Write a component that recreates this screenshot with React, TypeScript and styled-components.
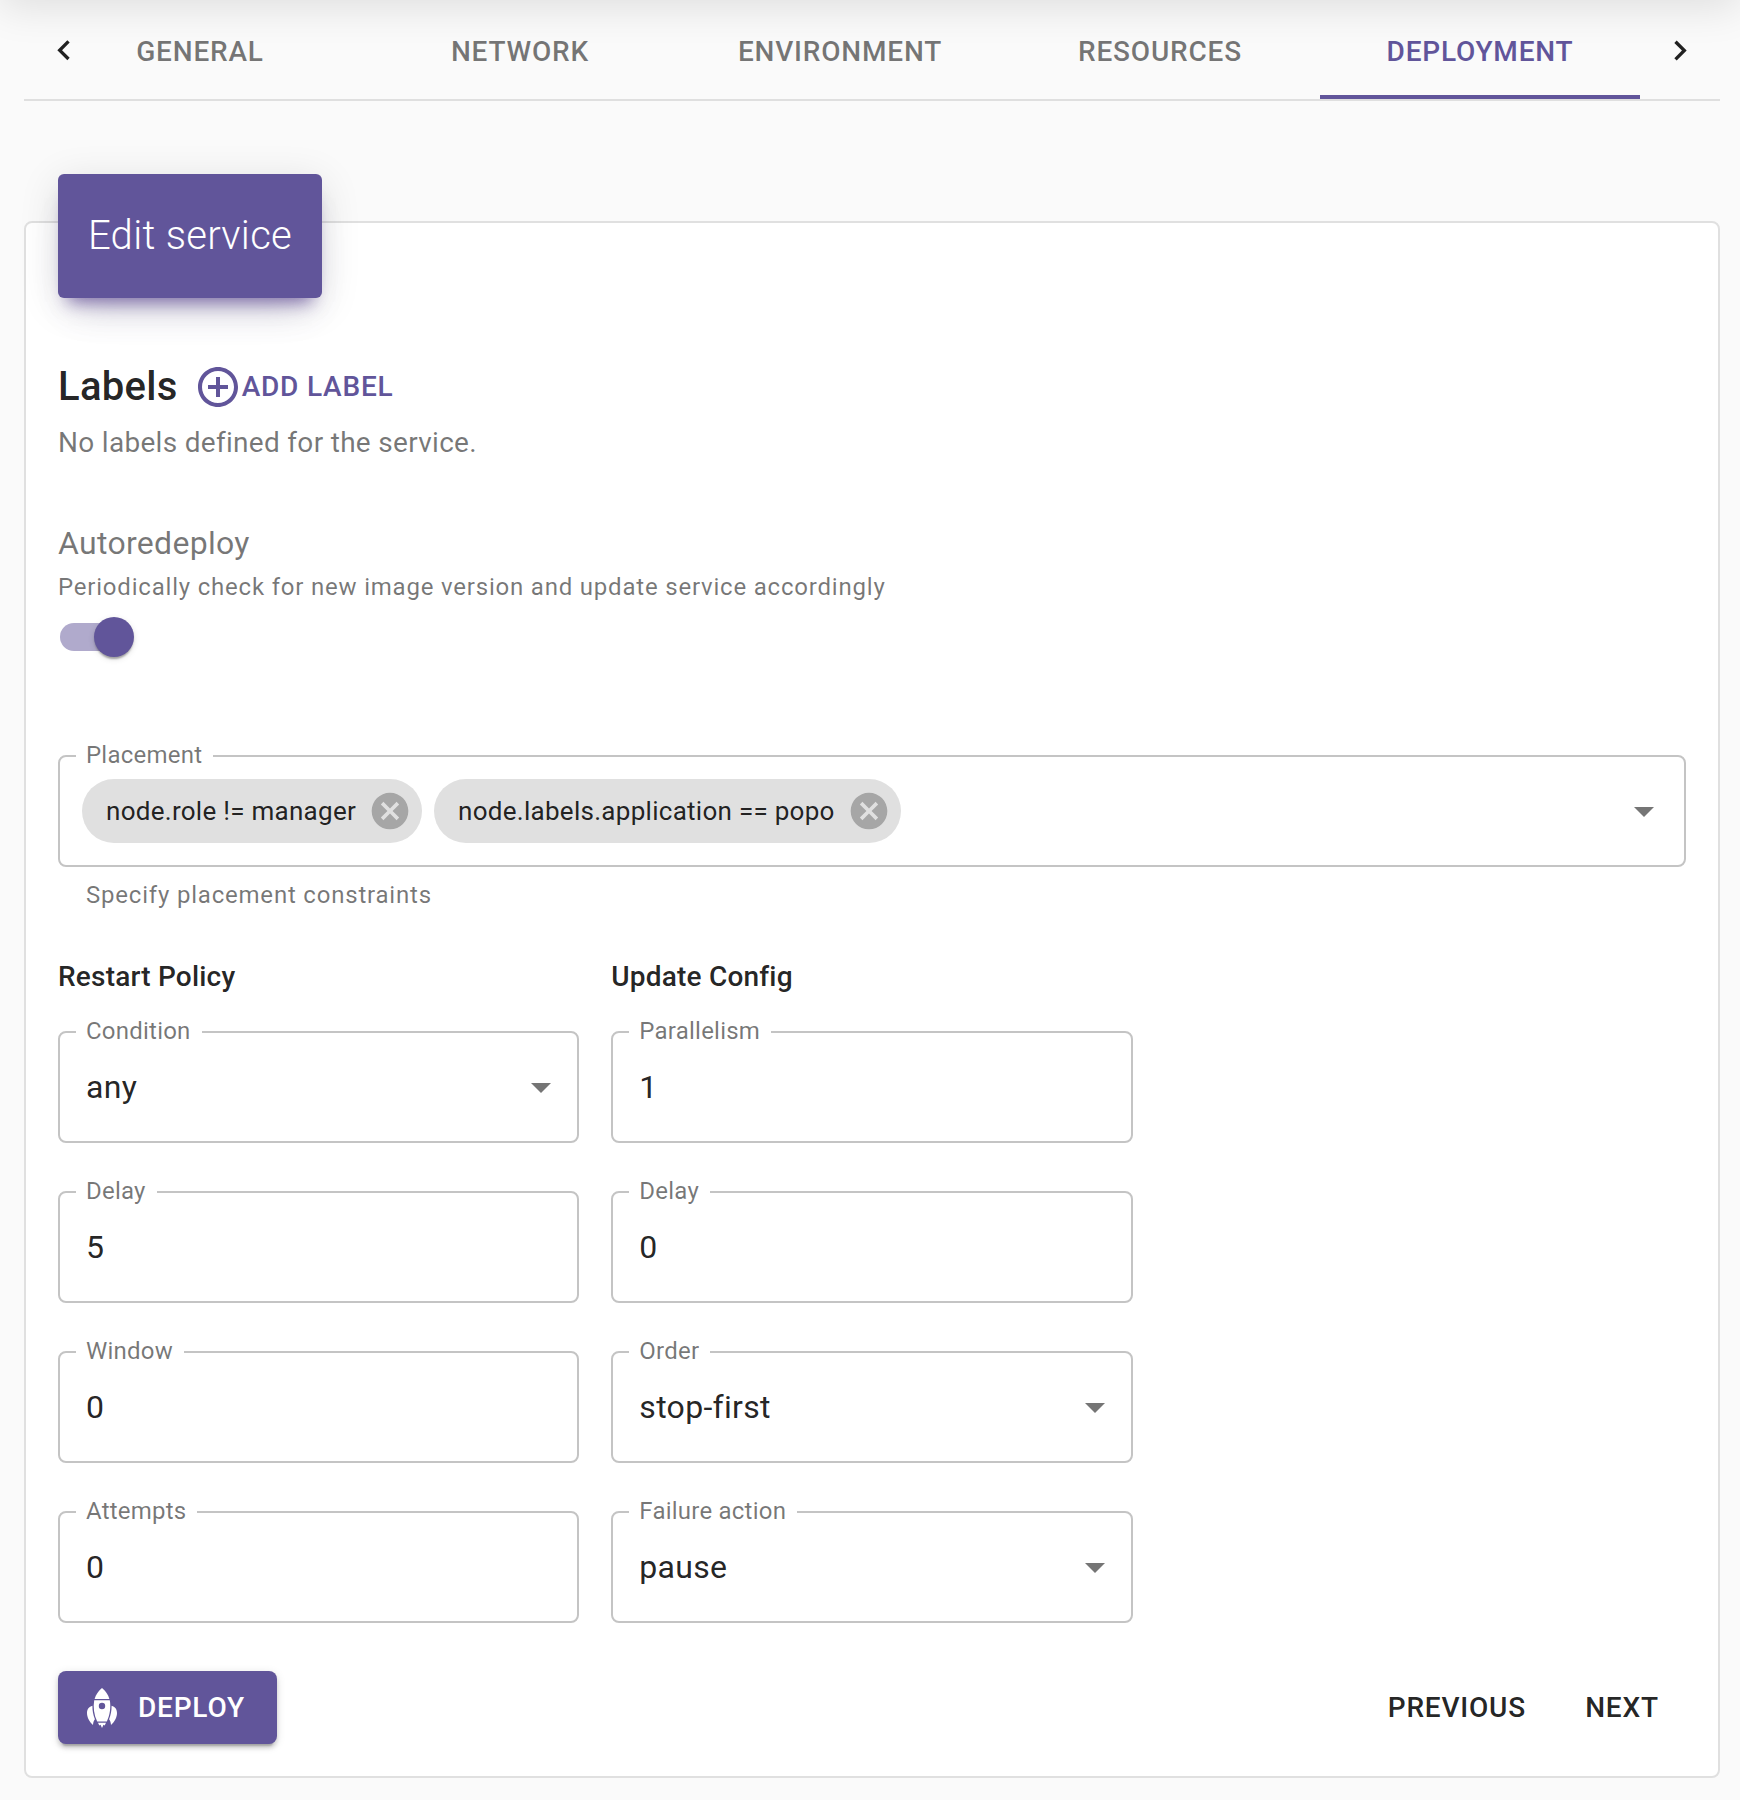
import React from 'react';
import styled, { createGlobalStyle } from 'styled-components';

const primary = '#61559a';
const ink = 'rgba(0, 0, 0, 0.87)';
const muted = 'rgba(0, 0, 0, 0.54)';

const GlobalStyle = createGlobalStyle`
  *, *::before, *::after { box-sizing: border-box; }
  body {
    margin: 0;
    background: #fafafa;
    color: ${ink};
    font-family: Roboto, "Noto Sans", sans-serif;
    font-size: 28px;
    -webkit-font-smoothing: antialiased;
  }
  h2, h3, p, fieldset, legend { margin: 0; padding: 0; }
  button { font-family: inherit; border: 0; background: none; padding: 0; margin: 0; color: inherit; }
`;

const Page = styled.div`
  position: relative;
  height: 1800px;
  overflow: hidden;
  padding: 3px 20px 0 24px;
`;

const HeaderShadow = styled.div`
  position: absolute;
  left: 0;
  right: 0;
  bottom: 100%;
  height: 110px;
  box-shadow: 0 8px 40px rgba(0, 0, 0, 0.11);
`;

const TabBar = styled.nav`
  display: flex;
  height: 98px;
  border-bottom: 2px solid #dfdfdf;
`;

const ScrollButton = styled.button`
  flex: 0 0 80px;
  display: flex;
  align-items: center;
  justify-content: center;
`;

const TabScroller = styled.div`
  flex: 1;
  display: flex;
  justify-content: flex-end;
  overflow: hidden;
`;

const Tab = styled.button<{ $active?: boolean }>`
  flex: 0 0 320px;
  padding-top: 4px;
  border-bottom: 4px solid ${(p) => (p.$active ? primary : 'transparent')};
  color: ${(p) => (p.$active ? primary : 'rgba(0, 0, 0, 0.54)')};
  font-size: 28px;
  font-weight: 500;
  letter-spacing: 0.02857em;
  line-height: 49px;
`;

const Card = styled.main`
  margin-top: 120px;
  height: 1557px;
  padding: 0 32px;
  background: #fff;
  border: 2px solid #e0e0e0;
  border-radius: 8px;
`;

const TitleBadge = styled.div`
  width: 264px;
  height: 124px;
  margin-top: -49px;
  border-radius: 6px;
  background: ${primary};
  color: #fff;
  font-size: 40px;
  font-weight: 300;
  letter-spacing: 0.0075em;
  line-height: 124px;
  text-align: center;
  white-space: nowrap;
  box-shadow: 0 24px 40px -20px rgba(97, 85, 154, 0.28), 0 8px 40px rgba(0, 0, 0, 0.12),
    0 14px 16px -10px rgba(70, 40, 140, 0.6);
`;

const LabelsHead = styled.div`
  display: flex;
  align-items: center;
  height: 64px;
  margin-top: 57px;
`;

const SectionTitle = styled.h2`
  font-size: 40px;
  font-weight: 500;
  letter-spacing: 0.0075em;
  line-height: 64px;
`;

const AddButton = styled.button`
  display: flex;
  align-items: center;
  margin-left: 16px;
  color: ${primary};
  font-size: 28px;
  font-weight: 500;
  letter-spacing: 0.02857em;
  line-height: 49px;
`;

const AddText = styled.span`
  padding-bottom: 2px;
`;

const Note = styled.p`
  margin-top: 4px;
  color: ${muted};
  font-size: 28px;
  letter-spacing: 0.01071em;
  line-height: 40px;
`;

const SettingName = styled.p`
  margin-top: 56px;
  color: ${muted};
  font-size: 32px;
  letter-spacing: 0.00938em;
  line-height: 48px;
`;

const Caption = styled.p<{ $helper?: boolean }>`
  margin-top: ${(p) => (p.$helper ? 8 : 0)}px;
  padding-left: ${(p) => (p.$helper ? 28 : 0)}px;
  color: ${muted};
  font-size: 24px;
  letter-spacing: 0.0332em;
  line-height: 40px;
`;

const Toggle = styled.div`
  display: flex;
  align-items: center;
  justify-content: flex-end;
  width: 68px;
  height: 28px;
  margin: 16px 0 94px 2px;
  border-radius: 14px;
  background: #b0aacc;
`;

const Thumb = styled.span`
  flex: 0 0 40px;
  height: 40px;
  margin-right: -6px;
  border-radius: 50%;
  background: ${primary};
  box-shadow: 0 4px 2px -2px rgba(0, 0, 0, 0.2), 0 2px 2px rgba(0, 0, 0, 0.14), 0 2px 6px rgba(0, 0, 0, 0.12);
`;

const Outline = styled.fieldset`
  min-width: 0;
  height: 122px;
  padding: 0 16px;
  border: 2px solid #c4c4c4;
  border-radius: 8px;
`;

const OutlineLabel = styled.legend`
  height: 22px;
  padding: 0 11px 2px 10px;
  color: ${muted};
  font-size: 24px;
  letter-spacing: 0.00938em;
  line-height: 20px;
`;

const Value = styled.div`
  display: flex;
  align-items: center;
  justify-content: space-between;
  height: 88px;
  margin-right: -4px;
  padding-left: 10px;
  font-size: 32px;
  letter-spacing: 0.00938em;
`;

const ChipRow = styled.div`
  display: flex;
  align-items: center;
  gap: 12px;
  height: 88px;
  padding-left: 6px;
`;

const Spacer = styled.span`
  flex: 1;
`;

const Chip = styled.span`
  display: flex;
  align-items: center;
  height: 64px;
  padding: 0 10px 0 24px;
  gap: 12px;
  border-radius: 32px;
  background: #e0e0e0;
  font-size: 26px;
  letter-spacing: 0.01071em;
  white-space: nowrap;
`;

const Columns = styled.div`
  display: grid;
  grid-template-columns: repeat(3, 1fr);
  gap: 32px;
  margin-top: 40px;
`;

const Column = styled.section`
  display: flex;
  flex-direction: column;
  gap: 38px;
`;

const ColumnTitle = styled.h3`
  margin-bottom: -16px;
  font-size: 28px;
  font-weight: 500;
  letter-spacing: 0.00714em;
  line-height: 44px;
`;

const Actions = styled.div`
  display: flex;
  gap: 16px;
  margin-top: 48px;
`;

const TextButton = styled.button`
  min-width: 128px;
  padding: 12px 16px;
  font-size: 28px;
  font-weight: 500;
  letter-spacing: 0.02857em;
  line-height: 49px;
`;

const DeployButton = styled(TextButton)`
  display: flex;
  align-items: center;
  gap: 21px;
  width: 219px;
  padding: 12px 29px;
  margin-right: auto;
  border-radius: 8px;
  background: ${primary};
  color: #fff;
  box-shadow: 0 6px 2px -4px rgba(0, 0, 0, 0.2), 0 4px 4px rgba(0, 0, 0, 0.14), 0 2px 10px rgba(0, 0, 0, 0.12);
`;

const Glyph = styled.svg`
  flex: none;
  display: block;
`;

const Icon = ({ d, size, fill = 'currentColor' }: { d: string; size: number; fill?: string }) => (
  <Glyph width={size} height={size} viewBox="0 0 24 24" fill={fill}>
    <path d={d} />
  </Glyph>
);

const paths = {
  left: 'M15.41 16.09l-4.58-4.59 4.58-4.59L14 5.5l-6 6 6 6z',
  right: 'M8.59 16.34l4.58-4.59-4.58-4.59L10 5.75l6 6-6 6z',
  add: 'M13 7h-2v4H7v2h4v4h2v-4h4v-2h-4V7zm-1-5C6.48 2 2 6.48 2 12s4.48 10 10 10 10-4.48 10-10S17.52 2 12 2zm0 18c-4.41 0-8-3.59-8-8s3.59-8 8-8 8 3.59 8 8-3.59 8-8 8z',
  caret: 'M7 10l5 5 5-5z',
  cancel:
    'M12 2C6.47 2 2 6.47 2 12s4.47 10 10 10 10-4.47 10-10S17.53 2 12 2zm5 13.59L15.59 17 12 13.41 8.41 17 7 15.59 10.59 12 7 8.41 8.41 7 12 10.59 15.59 7 17 8.41 13.41 12 17 15.59z',
};

const Rocket = () => (
  <Glyph width="30" height="40" viewBox="0 0 30 40" fill="#fff">
    <path d="M15 0C18.500 3 21.200 6.500 22.400 11H7.600C8.800 6.500 11.500 3 15 0z" />
    <path
      fillRule="evenodd"
      d="M7.200 12.200H22.800C24 19 23 27 19.800 33.500H10.200C7 27 6 19 7.200 12.200zM15 14.800a3.200 3.200 0 1 0 0 6.400a3.200 3.200 0 1 0 0-6.400z"
    />
    <path d="M5.400 17.800C2 18.600 0 21.500 0 25C0 29.500 2.500 34 6 37C6.200 34.500 6.700 32.700 7.900 31.200C6.200 27 5.400 23 5.400 17.800z" />
    <path d="M24.600 17.800C28 18.600 30 21.500 30 25C30 29.500 27.500 34 24 37C23.800 34.500 23.300 32.700 22.100 31.200C23.800 27 24.600 23 24.600 17.800z" />
    <path d="M11 34.800H19L17.700 37.500L16.500 36.800L15 40L13.500 36.800L12.300 37.500z" />
  </Glyph>
);

const Field = ({ label, value, select }: { label: string; value: string; select?: boolean }) => (
  <Outline>
    <OutlineLabel>{label}</OutlineLabel>
    <Value>
      {value}
      {select && <Icon d={paths.caret} size={48} fill="#757575" />}
    </Value>
  </Outline>
);

const tabs = ['GENERAL', 'NETWORK', 'ENVIRONMENT', 'RESOURCES', 'DEPLOYMENT'];
const constraints = ['node.role != manager', 'node.labels.application == popo'];
const groups = [
  {
    title: 'Restart Policy',
    fields: [
      { label: 'Condition', value: 'any', select: true },
      { label: 'Delay', value: '5' },
      { label: 'Window', value: '0' },
      { label: 'Attempts', value: '0' },
    ],
  },
  {
    title: 'Update Config',
    fields: [
      { label: 'Parallelism', value: '1' },
      { label: 'Delay', value: '0' },
      { label: 'Order', value: 'stop-first', select: true },
      { label: 'Failure action', value: 'pause', select: true },
    ],
  },
];

export default function App() {
  return (
    <>
      <GlobalStyle />
      <Page>
        <HeaderShadow />
        <TabBar>
          <ScrollButton aria-label="Scroll left">
            <Icon d={paths.left} size={40} />
          </ScrollButton>
          <TabScroller>
            {tabs.map((name) => (
              <Tab key={name} $active={name === 'DEPLOYMENT'}>
                {name}
              </Tab>
            ))}
          </TabScroller>
          <ScrollButton aria-label="Scroll right">
            <Icon d={paths.right} size={40} />
          </ScrollButton>
        </TabBar>
        <Card>
          <TitleBadge>Edit service</TitleBadge>
          <LabelsHead>
            <SectionTitle>Labels</SectionTitle>
            <AddButton>
              <Icon d={paths.add} size={48} />
              <AddText>ADD LABEL</AddText>
            </AddButton>
          </LabelsHead>
          <Note>No labels defined for the service.</Note>
          <SettingName>Autoredeploy</SettingName>
          <Caption>Periodically check for new image version and update service accordingly</Caption>
          <Toggle role="switch" aria-checked="true">
            <Thumb />
          </Toggle>
          <Outline>
            <OutlineLabel>Placement</OutlineLabel>
            <ChipRow>
              {constraints.map((text) => (
                <Chip key={text}>
                  {text}
                  <Icon d={paths.cancel} size={44} fill="#a6a6a6" />
                </Chip>
              ))}
              <Spacer />
              <Icon d={paths.caret} size={48} fill="#757575" />
            </ChipRow>
          </Outline>
          <Caption $helper>Specify placement constraints</Caption>
          <Columns>
            {groups.map((group) => (
              <Column key={group.title}>
                <ColumnTitle>{group.title}</ColumnTitle>
                {group.fields.map((field) => (
                  <Field key={field.label} {...field} />
                ))}
              </Column>
            ))}
          </Columns>
          <Actions>
            <DeployButton>
              <Rocket />
              DEPLOY
            </DeployButton>
            <TextButton>PREVIOUS</TextButton>
            <TextButton>NEXT</TextButton>
          </Actions>
        </Card>
      </Page>
    </>
  );
}
